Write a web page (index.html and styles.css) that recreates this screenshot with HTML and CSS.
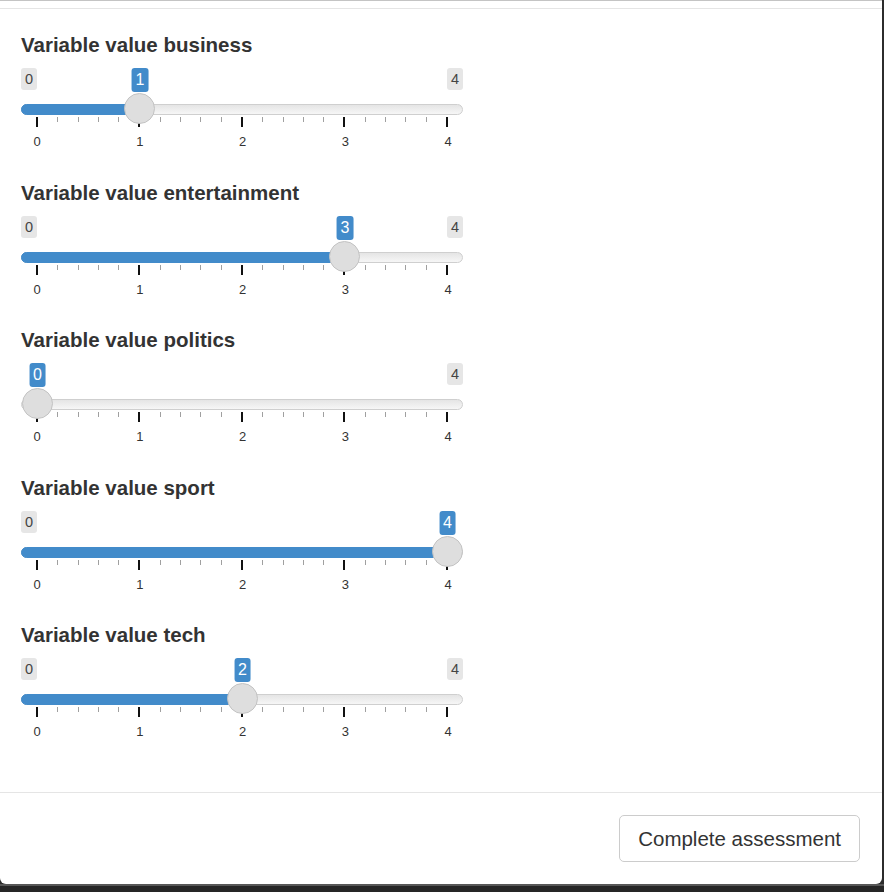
FILE: index.html
```html
<!DOCTYPE html>
<html>
<head>
<meta charset="utf-8">
<title>Assessment</title>
<link rel="stylesheet" href="styles.css">
</head>
<body>
<div class="backdrop">
  <div class="modal">
    <div class="modal-header"></div>
    <div class="modal-body">

      <div class="form-group">
        <label class="control-label">Variable value business</label>
        <div class="irs" style="--v:1">
          <span class="irs-line"></span>
          <span class="irs-bar"></span>
          <span class="irs-min">0</span>
          <span class="irs-max">4</span>
          <div class="irs-ticks">
            <i class="major"></i><i></i><i></i><i></i><i></i>
            <i class="major"></i><i></i><i></i><i></i><i></i>
            <i class="major"></i><i></i><i></i><i></i><i></i>
            <i class="major"></i><i></i><i></i><i></i><i></i>
            <i class="major"></i>
          </div>
          <div class="irs-grid-text"><span>0</span><span>1</span><span>2</span><span>3</span><span>4</span></div>
          <span class="irs-handle"></span>
          <span class="irs-single">1</span>
        </div>
      </div>

      <div class="form-group">
        <label class="control-label">Variable value entertainment</label>
        <div class="irs" style="--v:3">
          <span class="irs-line"></span>
          <span class="irs-bar"></span>
          <span class="irs-min">0</span>
          <span class="irs-max">4</span>
          <div class="irs-ticks">
            <i class="major"></i><i></i><i></i><i></i><i></i>
            <i class="major"></i><i></i><i></i><i></i><i></i>
            <i class="major"></i><i></i><i></i><i></i><i></i>
            <i class="major"></i><i></i><i></i><i></i><i></i>
            <i class="major"></i>
          </div>
          <div class="irs-grid-text"><span>0</span><span>1</span><span>2</span><span>3</span><span>4</span></div>
          <span class="irs-handle"></span>
          <span class="irs-single">3</span>
        </div>
      </div>

      <div class="form-group">
        <label class="control-label">Variable value politics</label>
        <div class="irs at-min" style="--v:0">
          <span class="irs-line"></span>
          <span class="irs-bar"></span>
          <span class="irs-max">4</span>
          <div class="irs-ticks">
            <i class="major"></i><i></i><i></i><i></i><i></i>
            <i class="major"></i><i></i><i></i><i></i><i></i>
            <i class="major"></i><i></i><i></i><i></i><i></i>
            <i class="major"></i><i></i><i></i><i></i><i></i>
            <i class="major"></i>
          </div>
          <div class="irs-grid-text"><span>0</span><span>1</span><span>2</span><span>3</span><span>4</span></div>
          <span class="irs-handle"></span>
          <span class="irs-single">0</span>
        </div>
      </div>

      <div class="form-group">
        <label class="control-label">Variable value sport</label>
        <div class="irs" style="--v:4">
          <span class="irs-line"></span>
          <span class="irs-bar"></span>
          <span class="irs-min">0</span>
          <div class="irs-ticks">
            <i class="major"></i><i></i><i></i><i></i><i></i>
            <i class="major"></i><i></i><i></i><i></i><i></i>
            <i class="major"></i><i></i><i></i><i></i><i></i>
            <i class="major"></i><i></i><i></i><i></i><i></i>
            <i class="major"></i>
          </div>
          <div class="irs-grid-text"><span>0</span><span>1</span><span>2</span><span>3</span><span>4</span></div>
          <span class="irs-handle"></span>
          <span class="irs-single">4</span>
        </div>
      </div>

      <div class="form-group">
        <label class="control-label">Variable value tech</label>
        <div class="irs" style="--v:2">
          <span class="irs-line"></span>
          <span class="irs-bar"></span>
          <span class="irs-min">0</span>
          <span class="irs-max">4</span>
          <div class="irs-ticks">
            <i class="major"></i><i></i><i></i><i></i><i></i>
            <i class="major"></i><i></i><i></i><i></i><i></i>
            <i class="major"></i><i></i><i></i><i></i><i></i>
            <i class="major"></i><i></i><i></i><i></i><i></i>
            <i class="major"></i>
          </div>
          <div class="irs-grid-text"><span>0</span><span>1</span><span>2</span><span>3</span><span>4</span></div>
          <span class="irs-handle"></span>
          <span class="irs-single">2</span>
        </div>
      </div>

    </div>
    <div class="modal-footer">
      <button class="btn">Complete assessment</button>
    </div>
  </div>
</div>
</body>
</html>
```

FILE: styles.css
```css
* { box-sizing: border-box; }

html, body {
  margin: 0;
  padding: 0;
}

body {
  font-family: "Liberation Sans", Arial, Helvetica, sans-serif;
  color: #333;
  background: #2c2c2c;
  width: 884px;
  height: 892px;
  overflow: hidden;
}

.backdrop {
  height: 892px;
  background: linear-gradient(to bottom, transparent 884px, #575757 884px, #575757 886px, #262626 886px);
}

.modal {
  width: 882px;
  height: 884px;
  background: #fff;
  border-top: 1px solid #c4c4c4;
  border-radius: 0 0 6px 6px;
  display: flex;
  flex-direction: column;
}

.modal-header {
  height: 8px;
  border-bottom: 1px solid #e5e5e5;
}

.modal-body {
  padding: 22px 21px 20px 21px;
  flex: 1;
}

.form-group {
  margin-bottom: 27.5px;
}

.control-label {
  display: block;
  font-weight: bold;
  font-size: 20.5px;
  line-height: 28px;
  margin-bottom: 7px;
  color: #333;
}

.irs {
  position: relative;
  width: 442px;
  height: 85px;
}

.irs-line {
  position: absolute;
  left: 0;
  top: 38px;
  width: 442px;
  height: 11px;
  border: 1px solid #cfcfcf;
  border-radius: 8px;
  background: linear-gradient(to bottom, #dcdcdc -50%, #fff 150%);
}

.irs-bar {
  position: absolute;
  left: 0;
  top: 38px;
  height: 11px;
  width: calc(16px + var(--v) * 102.5px);
  background: #428bca;
  border: 1px solid #428bca;
  border-radius: 8px 0 0 8px;
}
.irs.at-min .irs-bar { display: none; }

.irs-min, .irs-max {
  position: absolute;
  top: 2px;
  height: 22px;
  padding: 0 4px;
  font-size: 14.5px;
  line-height: 22px;
  color: #444;
  background: #e6e6e6;
  border-radius: 3px;
}
.irs-min { left: 0; }
.irs-max { right: 0; }

.irs-single {
  position: absolute;
  top: 2px;
  left: calc(16.5px + var(--v) * 102.5px);
  transform: translateX(-50%);
  height: 24px;
  padding: 0 4px;
  font-size: 16px;
  line-height: 24px;
  color: #fff;
  background: #428bca;
  border-radius: 3px;
  z-index: 3;
}

.irs-handle {
  position: absolute;
  top: 27px;
  left: calc(0.5px + var(--v) * 102.5px);
  width: 31px;
  height: 31px;
  border-radius: 50%;
  background: #dedede;
  border: 1px solid #c3c3c3;
  z-index: 2;
}

.irs-ticks {
  position: absolute;
  left: 15px;
  top: 51px;
  width: 412px;
  display: flex;
  justify-content: space-between;
  align-items: flex-start;
}
.irs-ticks i {
  display: block;
  width: 1px;
  height: 5px;
  background: #a0a0a0;
}
.irs-ticks i.major {
  width: 2px;
  height: 10px;
  background: #111;
}

.irs-grid-text {
  position: absolute;
  left: 16px;
  top: 68px;
  width: 411px;
  display: flex;
  justify-content: space-between;
  font-size: 13px;
  line-height: 16px;
  color: #333;
}
.irs-grid-text span {
  width: 0;
  display: flex;
  justify-content: center;
}

.modal-footer {
  border-top: 1px solid #e5e5e5;
  padding: 22px 22px 22px 0;
  display: flex;
  justify-content: flex-end;
}

.btn {
  font-family: "Liberation Sans", Arial, Helvetica, sans-serif;
  font-size: 20.5px;
  color: #333;
  background: #fff;
  border: 1px solid #cccccc;
  border-radius: 5px;
  height: 47px;
  padding: 0 18px;
  cursor: pointer;
}
```
